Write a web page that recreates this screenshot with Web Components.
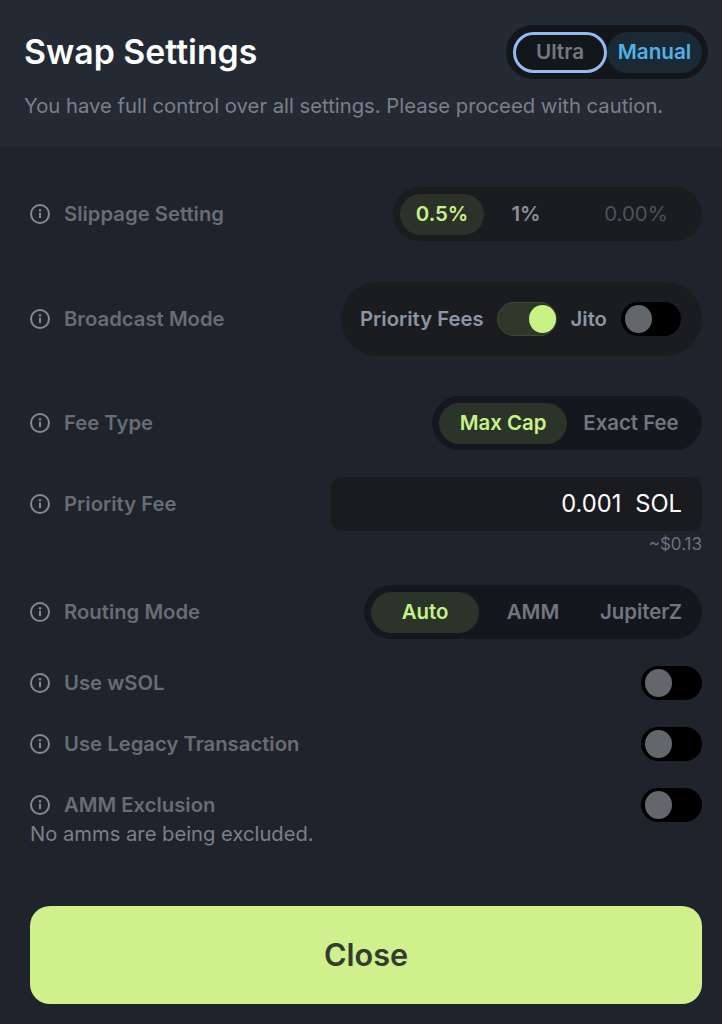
<!DOCTYPE html>
<html><head><meta charset="utf-8"><style>
html,body{margin:0;padding:0;background:#1f232b}
body{font-family:Inter,"Liberation Sans",sans-serif}
</style></head><body>
<swap-panel>
<swap-header slot="header" title-text="Swap Settings" sub="You have full control over all settings. Please proceed with caution."></swap-header>
<set-row label="Slippage Setting" style="margin-bottom:14px">
  <seg-pill style="--pad:7px;--bg:#1a1c20;--w:309px">
    <seg-opt active style="width:84px;--abg:#2c3229">0.5%</seg-opt>
    <seg-opt style="width:84px">1%</seg-opt>
    <seg-opt dim style="width:136px">0.00%</seg-opt>
  </seg-pill>
</set-row>
<set-row label="Broadcast Mode" style="margin-bottom:13px"><broadcast-pill></broadcast-pill></set-row>
<set-row label="Fee Type">
  <seg-pill style="--pad:7px;--bg:#14181e;--w:270px">
    <seg-opt active style="width:128px;--abg:#2a3429">Max Cap</seg-opt>
    <seg-opt muted style="width:128px">Exact Fee</seg-opt>
  </seg-pill>
</set-row>
<set-row label="Priority Fee" note="~$0.13"><fee-input value="0.001" unit="SOL"></fee-input></set-row>
<set-row label="Routing Mode">
  <seg-pill style="--pad:7px;--bg:#14181e;--w:338px">
    <seg-opt active style="width:108px;--abg:#2a3429">Auto</seg-opt>
    <seg-opt muted style="width:108px">AMM</seg-opt>
    <seg-opt muted style="width:108px">JupiterZ</seg-opt>
  </seg-pill>
</set-row>
<set-row label="Use wSOL"><tog-switch style="--tw:61px"></tog-switch></set-row>
<set-row label="Use Legacy Transaction"><tog-switch style="--tw:61px"></tog-switch></set-row>
<set-row label="AMM Exclusion"><tog-switch style="--tw:61px"></tog-switch></set-row>
<hint-text>No amms are being excluded.</hint-text>
<close-button>Close</close-button>
</swap-panel>
<script>
function def(name, css, html){
  customElements.define(name, class extends HTMLElement{
    connectedCallback(){
      if(this.shadowRoot) return;
      const r=this.attachShadow({mode:'open'});
      r.innerHTML='<style>'+css+'</style>'+(typeof html==='function'?html(this):html);
    }
  });
}
const info='<svg width="20" height="20" viewBox="0 0 20 20" fill="none" aria-hidden="true"><circle cx="10" cy="10" r="9" stroke="#85898e" stroke-width="2"/><rect x="9" y="8.6" width="2" height="5.6" rx=".6" fill="#85898e"/><circle cx="10" cy="6.2" r="1.2" fill="#85898e"/></svg>';
def('swap-panel',`:host{display:block;width:722px;height:1024px;overflow:hidden;background:#1f232b}
 .body{display:flex;flex-direction:column;gap:27px;padding:40px 20px 0 30px}`,
 '<slot name="header"></slot><div class="body"><slot></slot></div>');
def('swap-header',`:host{display:block;box-sizing:border-box;height:147px;padding:25px 14px 0 24px;background:#242a33}
 .top{display:flex;justify-content:space-between;align-items:center;height:54px}
 h1{margin:0;font:600 33.8px/40px Inter,sans-serif;color:#fff}
 p{margin:13px 0 0;font:400 20.25px/28px Inter,sans-serif;color:#7a8089}
 .mode{display:flex;align-items:center;box-sizing:border-box;width:202px;height:54px;padding:0 6px 0 7px;border-radius:27px;background:#13171c}
 .m{display:flex;align-items:center;justify-content:center;box-sizing:border-box;height:41px;border-radius:21px;font:600 20.7px/1 Inter,sans-serif}
 .u{width:94px;border:3px solid #93bbf3;color:#75787d}
 .a{width:95px;background:#1a2933;color:#4cb4e8}`,
 h=>`<div class="top"><h1>${h.getAttribute('title-text')}</h1><div class="mode"><div class="m u">Ultra</div><div class="m a">Manual</div></div></div><p>${h.getAttribute('sub')}</p>`);
def('set-row',`:host{display:block}
 .r{display:flex;justify-content:space-between;align-items:center}
 .l{display:flex;align-items:center;gap:14px;font:600 20.3px/24px Inter,sans-serif;color:#666d75}
 svg{flex:none}
 .n{height:27px;margin-bottom:-27px;text-align:right;font:400 17px/26px Inter,sans-serif;color:#6d727a}
 :host([note]){padding-bottom:27px}`,
 h=>`<div class="r"><div class="l">${info}<span>${h.getAttribute('label')}</span></div><slot></slot></div>`+(h.getAttribute('note')?`<div class="n">${h.getAttribute('note')}</div>`:''));
def('seg-pill',`:host{display:flex;align-items:center;box-sizing:border-box;width:var(--w);height:54px;padding:0 var(--pad);border-radius:27px;background:var(--bg)}`,'<slot></slot>');
def('seg-opt',`:host{display:flex;align-items:center;justify-content:center;height:41px;border-radius:21px;font:600 20.4px/1 Inter,sans-serif;color:#8a9099;flex:none}
 :host([active]){background:var(--abg);color:#c7f284}
 :host([muted]){color:#72767d}
 :host([dim]){color:#4f5359;font-weight:400}`,'<slot></slot>');
def('broadcast-pill',`:host{display:flex;align-items:center;box-sizing:border-box;width:361px;height:74px;padding:0 20px 0 19px;border-radius:37px;background:#1a1c20;font:600 20.3px/1 Inter,sans-serif;color:#8d96a3}
 .a{margin-right:13.2px}.b{margin:0 13.8px}`,
 `<span class="a">Priority Fees</span><tog-switch on></tog-switch><span class="b">Jito</span><tog-switch></tog-switch>`);
def('tog-switch',`:host{display:block;box-sizing:border-box;width:var(--tw,60px);height:34px;padding:3px 4px;border-radius:17px;background:#000;flex:none}
 i{display:block;width:27px;height:28px;border-radius:50%;background:#63666b}
 :host([on]){background:#2f3729;border:1px solid #3f4a38;padding:2px 0}
 :host([on]) i{margin-left:auto;margin-right:0;background:#c7f284}`,'<i></i>');
def('fee-input',`:host{display:flex;justify-content:flex-end;align-items:center;gap:14px;box-sizing:border-box;width:371px;height:54px;padding:0 20px;border-radius:10px;background:#1a1b1f;font:400 23.7px/1 Inter,sans-serif;color:#fff}`,
 h=>`<span>${h.getAttribute('value')}</span><span>${h.getAttribute('unit')}</span>`);
def('hint-text',`:host{display:block;margin-top:-27px;font:400 20.2px/24px Inter,sans-serif;color:#7a808a}`,'<slot></slot>');
def('close-button',`:host{display:flex;align-items:center;justify-content:center;height:98px;margin-top:33px;border-radius:20px;background:#cff08a;font:600 30.6px/1 Inter,sans-serif;color:#343b32}`,'<slot></slot>');
</script>
</body></html>
